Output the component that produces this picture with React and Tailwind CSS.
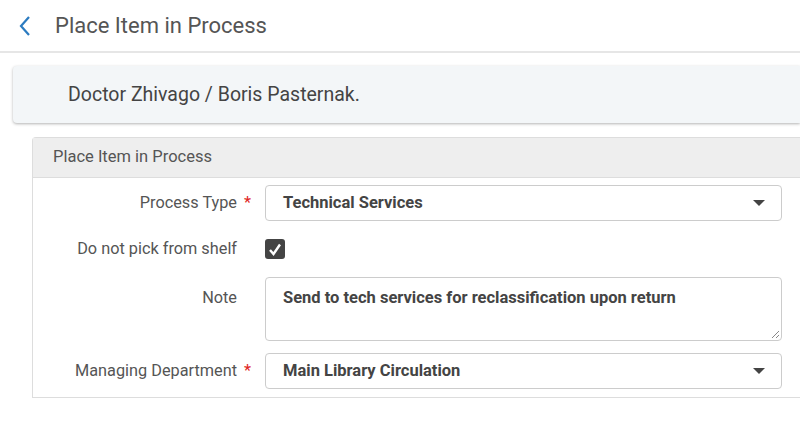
import React from "react";

const Caret = () => (
  <svg width="12" height="6" viewBox="0 0 12 6"><path d="M0 0h12L6 6z" fill="#444" /></svg>
);

const Label = ({ children, req, className = "" }) => (
  <div className={`w-[232px] shrink-0 flex justify-end pr-[14px] text-[16.3px] text-[#555] ${className}`}>
    <span>{children}</span>
    <span className={`w-[14px] text-right text-[#e02424] ${req ? "" : "invisible"}`}>*</span>
  </div>
);

export default function App() {
  return (
    <div className="w-[800px] h-[439px] bg-white overflow-hidden" style={{ fontFamily: "Roboto, 'Liberation Sans', sans-serif" }}>
      <div className="h-[53px] border-b-2 border-[#e6e6e6] flex items-center">
        <svg className="ml-[18px]" width="14" height="22" viewBox="0 0 14 22"><path d="M11 2 3 11l8 9" fill="none" stroke="#2b7bc0" strokeWidth="2.2" /></svg>
        <span className="ml-[23px] text-[22px] text-[#555]">Place Item in Process</span>
      </div>
      <div className="ml-[13px] mt-[13px] h-[57px] bg-[#f3f6f8] rounded-l-[4px] shadow-[0_1px_3px_rgba(0,0,0,0.3)] flex items-center pl-[55px] text-[19.5px] text-[#444]">
        Doctor Zhivago / Boris Pasternak.
      </div>
      <div className="ml-[32px] mt-[14px] h-[261px] border border-[#ddd] border-r-0 rounded-tl-[4px]">
        <div className="h-[40px] bg-[#eeeeee] border-b border-[#ddd] flex items-center pl-[20px] text-[16.5px] text-[#555]">Place Item in Process</div>
        <div className="pt-[7px] flex flex-col">
          <div className="flex items-center h-[36px]">
            <Label req>Process Type</Label>
            <div className="w-[517px] h-[36px] border border-[#ccc] rounded-[4px] flex items-center justify-between pl-[17px] pr-[16px] text-[16.5px] font-bold text-[#444]">
              Technical Services <Caret />
            </div>
          </div>
          <div className="flex items-start mt-[18px] h-[21px]">
            <Label className="-mt-[2px]">Do not pick from shelf</Label>
            <div className="w-[20px] h-[20px] rounded-[3px] bg-[#444] flex items-center justify-center">
              <svg width="14" height="13" viewBox="0 0 14 13"><path d="M2 7l3.5 4L12 1.5" fill="none" stroke="#fff" strokeWidth="2.4" /></svg>
            </div>
          </div>
          <div className="flex items-start mt-[17px]">
            <Label className="pt-[9px]">Note</Label>
            <div className="relative w-[517px] h-[64px] border border-[#ccc] rounded-[4px] pl-[17px] pt-[8px] text-[16.5px] font-bold text-[#444]">
              Send to tech services for reclassification upon return
              <svg className="absolute right-[1px] bottom-[1px]" width="10" height="10" viewBox="0 0 10 10"><path d="M9 2 2 9M9 6 6 9" stroke="#888" strokeWidth="1" /></svg>
            </div>
          </div>
          <div className="flex items-center h-[36px] mt-[12px]">
            <Label req>Managing Department</Label>
            <div className="w-[517px] h-[36px] border border-[#ccc] rounded-[4px] flex items-center justify-between pl-[17px] pr-[16px] text-[16.5px] font-bold text-[#444]">
              Main Library Circulation <Caret />
            </div>
          </div>
        </div>
      </div>
    </div>
  );
}
